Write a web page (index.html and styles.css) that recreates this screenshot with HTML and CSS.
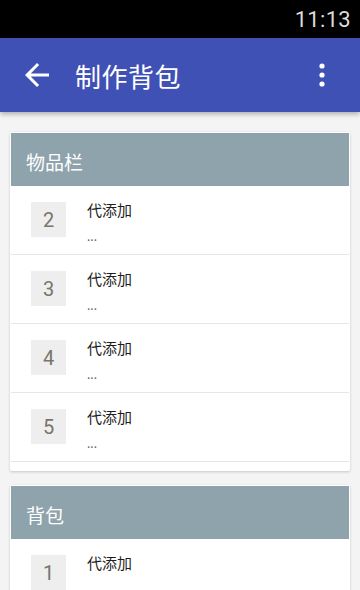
FILE: index.html
```html
<!DOCTYPE html>
<html lang="zh">
<head>
<meta charset="utf-8">
<title>制作背包</title>
<link rel="stylesheet" href="styles.css">
</head>
<body>
<div class="status"><span class="time">11:13</span></div>
<header class="appbar">
  <svg class="back" viewBox="0 0 24 24" width="36" height="36"><path d="M20 11H7.83l5.59-5.59L12 4l-8 8 8 8 1.41-1.41L7.83 13H20v-2z" fill="#fff"/></svg>
  <h1 class="title">制作背包</h1>
  <svg class="more" viewBox="0 0 10 30" width="10" height="30"><circle cx="5" cy="6" r="2.6" fill="#fff"/><circle cx="5" cy="15" r="2.6" fill="#fff"/><circle cx="5" cy="24" r="2.6" fill="#fff"/></svg>
</header>
<main class="content">
  <section class="card">
    <div class="card-head">物品栏</div>
    <div class="row"><div class="num">2</div><div class="txt"><div class="name">代添加</div><div class="sub">...</div></div></div>
    <div class="row"><div class="num">3</div><div class="txt"><div class="name">代添加</div><div class="sub">...</div></div></div>
    <div class="row"><div class="num">4</div><div class="txt"><div class="name">代添加</div><div class="sub">...</div></div></div>
    <div class="row"><div class="num">5</div><div class="txt"><div class="name">代添加</div><div class="sub">...</div></div></div>
  </section>
  <section class="card">
    <div class="card-head">背包</div>
    <div class="row"><div class="num">1</div><div class="txt"><div class="name">代添加</div><div class="sub">...</div></div></div>
  </section>
</main>
</body>
</html>
```
FILE: styles.css
```css
* { box-sizing: border-box; }
html, body { margin: 0; padding: 0; }
body {
  width: 360px;
  height: 590px;
  overflow: hidden;
  background: #f4f4f4;
  font-family: Roboto, "Noto Sans CJK SC", sans-serif;
}
.status {
  height: 38px;
  background: #000;
  display: flex;
  justify-content: flex-end;
  align-items: center;
  padding-right: 9px;
}
.time {
  color: #dcdcdc;
  font-family: Roboto, sans-serif;
  font-size: 22px;
  letter-spacing: 0.3px;
}
.appbar {
  height: 74px;
  background: #3f51b5;
  display: flex;
  align-items: center;
  padding-left: 19px;
  box-shadow: 0 2px 5px rgba(0,0,0,0.3);
  position: relative;
  z-index: 1;
}
.back { flex: none; }
.title {
  margin: 0 0 0 20px;
  flex: 1;
  color: #fff;
  font-family: "Noto Sans CJK SC", sans-serif;
  font-weight: 400;
  font-size: 26px;
  letter-spacing: 0.5px;
}
.more { flex: none; margin-right: 33px; margin-top: -1px; }
.content {
  padding: 20px 10px 0;
  display: flex;
  flex-direction: column;
  gap: 14px;
}
.card {
  background: #fff;
  padding: 1px 1px 9px;
  box-shadow: 0 1px 3px rgba(0,0,0,0.18);
  border-radius: 2px;
}
.card-head {
  height: 53px;
  background: #8fa3ac;
  color: #fff;
  font-family: "Noto Sans CJK SC", sans-serif;
  font-size: 19px;
  display: flex;
  align-items: center;
  padding: 3px 0 0 15px;
}
.row {
  height: 69px;
  border-bottom: 1px solid #e6e6e6;
  display: flex;
  align-items: flex-start;
  padding: 16px 0 0 20px;
}
.num {
  width: 35px;
  height: 35px;
  background: #eeeeee;
  color: #77766a;
  font-family: Roboto, sans-serif;
  font-size: 20px;
  display: flex;
  align-items: center;
  justify-content: center;
}
.txt {
  margin-left: 21px;
  margin-top: -2px;
  font-family: "Noto Sans CJK SC", sans-serif;
}
.name {
  font-size: 15px;
  line-height: 20px;
  color: #1e1e1e;
}
.sub {
  font-size: 12px;
  line-height: 16px;
  margin-top: 8px;
  color: #666;
}
```
